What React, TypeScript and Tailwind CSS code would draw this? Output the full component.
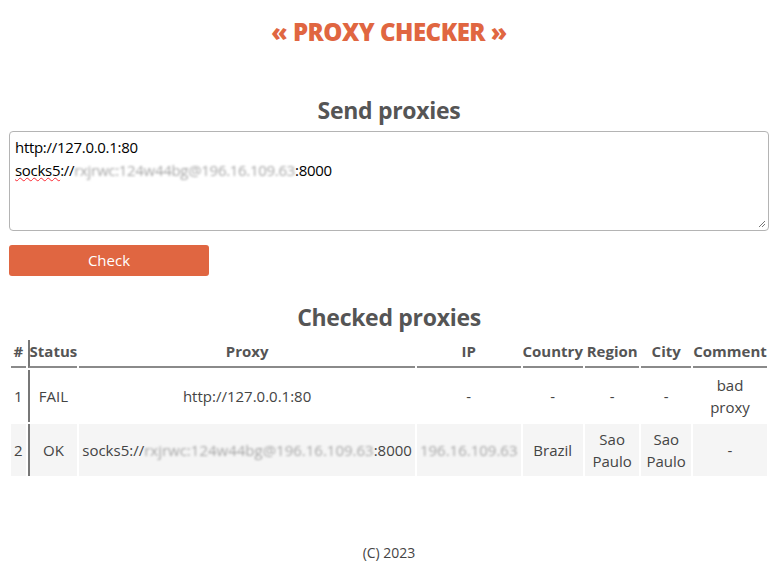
import React from 'react';

const font = { fontFamily: '"Open Sans", "Noto Sans", sans-serif' };

type Row = {
  n: number;
  status: string;
  proxyPre: string;
  proxyHidden?: string;
  proxyPost?: string;
  ip: string;
  ipHidden?: boolean;
  country: string;
  region: string;
  city: string;
  comment: string;
};

const rows: Row[] = [
  {
    n: 1,
    status: 'FAIL',
    proxyPre: 'http://127.0.0.1:80',
    ip: '-',
    country: '-',
    region: '-',
    city: '-',
    comment: 'bad proxy',
  },
  {
    n: 2,
    status: 'OK',
    proxyPre: 'socks5://',
    proxyHidden: 'rxjrwc:124w44bg@196.16.109.63',
    proxyPost: ':8000',
    ip: '196.16.109.63',
    ipHidden: true,
    country: 'Brazil',
    region: 'Sao Paulo',
    city: 'Sao Paulo',
    comment: '-',
  },
];

const Hidden: React.FC<{ children: React.ReactNode }> = ({ children }) => (
  <span className="text-[#a8a8a8] blur-[1.2px]">{children}</span>
);

export default function App() {
  const th = 'pb-[4px] border-b-2 border-[#8a8a8a] text-[15px] font-bold text-[#555] leading-[22px]';
  return (
    <div className="min-h-[583px] bg-white px-[9px] flex flex-col text-[#444]" style={font}>
      {/* Title */}
      <h1 className="pt-[16px] text-center text-[24px] font-extrabold text-[#e06641] leading-[32px] tracking-[-0.5px]">
        « PROXY CHECKER »
      </h1>

      {/* Send proxies */}
      <h2 className="mt-[46px] text-center text-[23px] font-bold text-[#555] leading-[32px] tracking-[-0.3px]">
        Send proxies
      </h2>
      <div className="mt-[5px] h-[100px] rounded-[4px] border border-[#b4b4b4] px-[5px] py-[4px] text-[15px] leading-[23px] tracking-[-0.3px] text-black relative">
        <div>http://127.0.0.1:80</div>
        <div>
          <span className="underline decoration-wavy decoration-red-500 decoration-1">socks5</span>://
          <Hidden>rxjrwc:124w44bg@196.16.109.63</Hidden>:8000
        </div>
        <svg className="absolute right-[2px] bottom-[2px]" width="8" height="8" viewBox="0 0 8 8">
          <path d="M7 1 L1 7 M7 4 L4 7" stroke="#777" strokeWidth="1" />
        </svg>
      </div>
      <button className="mt-[14px] w-[200px] h-[31px] rounded-[3px] bg-[#e06641] text-white text-[15px] leading-[31px]">
        Check
      </button>

      {/* Checked proxies */}
      <h2 className="mt-[25px] text-center text-[23px] font-bold text-[#555] leading-[32px] tracking-[-0.3px]">
        Checked proxies
      </h2>
      <table className="mt-[5px] w-full border-separate border-spacing-[2px] text-[15px] text-center">
        <thead>
          <tr>
            <th className={th}>#</th>
            <th className={th + ' border-l-2 border-l-[#777]'}>Status</th>
            <th className={th}>Proxy</th>
            <th className={th}>IP</th>
            <th className={th}>Country</th>
            <th className={th}>Region</th>
            <th className={th}>City</th>
            <th className={th}>Comment</th>
          </tr>
        </thead>
        <tbody>
          {rows.map((r) => {
            const bg = r.n % 2 === 0 ? 'bg-[#f5f5f5]' : '';
            const td = `h-[52px] px-[3px] leading-[22px] ${bg}`;
            return (
              <tr key={r.n}>
                <td className={td}>{r.n}</td>
                <td className={td + ' border-l-2 border-l-[#777] px-[7px]'}>{r.status}</td>
                <td className={td}>
                  {r.proxyPre}
                  {r.proxyHidden && <Hidden>{r.proxyHidden}</Hidden>}
                  {r.proxyPost}
                </td>
                <td className={td}>{r.ipHidden ? <Hidden>{r.ip}</Hidden> : r.ip}</td>
                <td className={td}>{r.country}</td>
                <td className={td}>{r.region}</td>
                <td className={td}>{r.city}</td>
                <td className={td}>{r.comment}</td>
              </tr>
            );
          })}
        </tbody>
      </table>

      <footer className="mt-[64px] text-center text-[14px] text-[#444]">(C) 2023</footer>
    </div>
  );
}
